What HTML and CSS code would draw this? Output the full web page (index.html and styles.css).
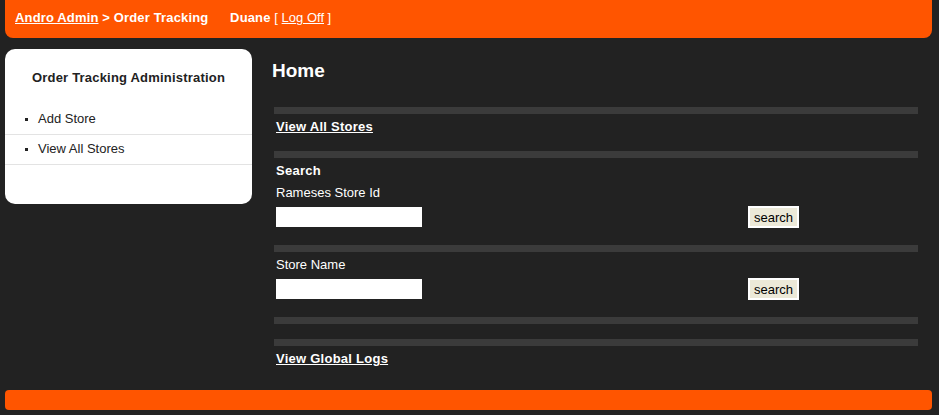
FILE: index.html
```html
<!DOCTYPE html>
<html>
<head>
<meta charset="utf-8">
<title>Order Tracking</title>
<link rel="stylesheet" href="styles.css">
</head>
<body>
<div class="page">
  <div class="header">
    <a href="#" class="hlink">Andro Admin</a> &gt; Order Tracking
    <span class="user">Duane</span> <span class="logoff">[ <a href="#">Log Off</a> ]</span>
  </div>
  <div class="content">
    <div class="sidebar">
      <div class="side-title">Order Tracking Administration</div>
      <ul class="side-list">
        <li>Add Store</li>
        <li>View All Stores</li>
      </ul>
    </div>
    <div class="main">
      <h1 class="title">Home</h1>
      <div class="bar bar-first"></div>
      <a href="#" class="blink">View All Stores</a>
      <div class="bar"></div>
      <div class="label strong">Search</div>
      <div class="label">Rameses Store Id</div>
      <div class="row"><input type="text" class="field"><button class="btn">search</button></div>
      <div class="bar bar-after-row"></div>
      <div class="label">Store Name</div>
      <div class="row"><input type="text" class="field"><button class="btn">search</button></div>
      <div class="bar bar-after-row"></div>
      <div class="bar bar-second"></div>
      <a href="#" class="blink">View Global Logs</a>
    </div>
  </div>
  <div class="footer"></div>
</div>
</body>
</html>
```
FILE: styles.css
```css
html, body {
  margin: 0;
  padding: 0;
  background: #222222;
  font-family: "Liberation Sans", Arial, sans-serif;
  font-size: 13px;
  color: #ffffff;
}
.page {
  width: 927px;
  margin-left: 5px;
}
.header {
  background: #ff5500;
  height: 38px;
  box-sizing: border-box;
  padding: 9px 0 0 10px;
  line-height: 18px;
  font-weight: bold;
  letter-spacing: 0.15px;
  color: #fff;
  border-radius: 0 0 8px 8px;
}
.header a {
  color: #fff;
}
.user {
  margin-left: 18px;
}
.logoff {
  font-weight: normal;
  letter-spacing: 0;
}
.content {
  display: flex;
  align-items: flex-start;
  margin-top: 11px;
}
.sidebar {
  width: 247px;
  background: #fff;
  border-radius: 10px;
  color: #222;
  padding-top: 20px;
  padding-bottom: 39px;
}
.side-title {
  text-align: center;
  font-weight: bold;
  letter-spacing: 0.2px;
  line-height: 18px;
}
.side-list {
  list-style: none;
  margin: 18px 0 0 0;
  padding: 0;
}
.side-list li {
  display: flex;
  align-items: center;
  line-height: 18px;
  padding: 5px 0 6px 20px;
  border-bottom: 1px solid #e3e3e3;
}
.side-list li::before {
  content: "";
  width: 3px;
  height: 3px;
  background: #222;
  margin-right: 10px;
}
.main {
  margin-left: 22px;
  width: 644px;
  display: flex;
  flex-direction: column;
  align-items: flex-start;
}
.title {
  margin: 11px 0 0 -2px;
  font-size: 19px;
  line-height: 22px;
  font-weight: bold;
}
.bar {
  align-self: stretch;
  height: 7px;
  background: #3b3b3b;
  margin-top: 16px;
}
.bar-first {
  margin-top: 25px;
}
.bar-after-row {
  margin-top: 17px;
}
.bar-second {
  margin-top: 15px;
}
.blink {
  margin: 3px 0 0 2px;
  padding-top: 1px;
  height: 17px;
  line-height: 18px;
  font-weight: bold;
  letter-spacing: 0.25px;
  color: #fff;
}
.label {
  margin: 3px 0 0 2px;
  padding-top: 1px;
  height: 17px;
  line-height: 18px;
}
.label.strong {
  font-weight: bold;
  letter-spacing: 0.25px;
}
.label + .label {
  margin-top: 4px;
}
.row {
  margin: 5px 0 0 2px;
  display: grid;
  grid-template-columns: 472px auto;
  align-items: center;
}
.field {
  width: 146px;
  height: 20px;
  box-sizing: border-box;
  border: none;
  background: #fff;
  padding: 0 2px;
  margin: 0;
}
.btn {
  width: 51px;
  height: 22px;
  box-sizing: border-box;
  border: 2px solid #fff;
  background: #ece9d8;
  color: #000;
  font-family: "Liberation Sans", Arial, sans-serif;
  font-size: 13px;
  padding: 0;
  margin: 0;
}
.footer {
  margin-top: 23px;
  height: 20px;
  background: #ff5500;
  border-radius: 4px;
}
```
